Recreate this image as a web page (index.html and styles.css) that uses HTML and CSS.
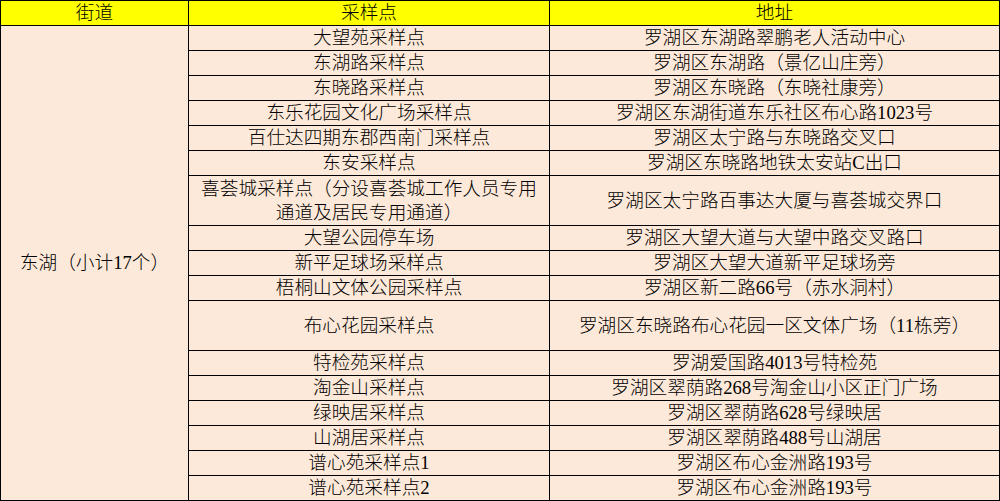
FILE: index.html
```html
<!DOCTYPE html>
<html lang="zh-CN">
<head>
<meta charset="utf-8">
<title>采样点</title>
<link rel="stylesheet" href="styles.css">
</head>
<body>
<div class="sheet">
  <div class="cell head">街道</div>
  <div class="cell head">采样点</div>
  <div class="cell head">地址</div>

  <div class="cell street">东湖（小计17个）</div>

  <div class="cell">大望苑采样点</div>
  <div class="cell">罗湖区东湖路翠鹏老人活动中心</div>
  <div class="cell">东湖路采样点</div>
  <div class="cell">罗湖区东湖路（景亿山庄旁）</div>
  <div class="cell">东晓路采样点</div>
  <div class="cell">罗湖区东晓路（东晓社康旁）</div>
  <div class="cell">东乐花园文化广场采样点</div>
  <div class="cell">罗湖区东湖街道东乐社区布心路1023号</div>
  <div class="cell">百仕达四期东郡西南门采样点</div>
  <div class="cell">罗湖区太宁路与东晓路交叉口</div>
  <div class="cell">东安采样点</div>
  <div class="cell">罗湖区东晓路地铁太安站C出口</div>
  <div class="cell">喜荟城采样点（分设喜荟城工作人员专用通道及居民专用通道）</div>
  <div class="cell">罗湖区太宁路百事达大厦与喜荟城交界口</div>
  <div class="cell">大望公园停车场</div>
  <div class="cell">罗湖区大望大道与大望中路交叉路口</div>
  <div class="cell">新平足球场采样点</div>
  <div class="cell">罗湖区大望大道新平足球场旁</div>
  <div class="cell">梧桐山文体公园采样点</div>
  <div class="cell">罗湖区新二路66号（赤水洞村）</div>
  <div class="cell">布心花园采样点</div>
  <div class="cell">罗湖区东晓路布心花园一区文体广场（11栋旁）</div>
  <div class="cell">特检苑采样点</div>
  <div class="cell">罗湖爱国路4013号特检苑</div>
  <div class="cell">淘金山采样点</div>
  <div class="cell">罗湖区翠荫路268号淘金山小区正门广场</div>
  <div class="cell">绿映居采样点</div>
  <div class="cell">罗湖区翠荫路628号绿映居</div>
  <div class="cell">山湖居采样点</div>
  <div class="cell">罗湖区翠荫路488号山湖居</div>
  <div class="cell">谱心苑采样点1</div>
  <div class="cell">罗湖区布心金洲路193号</div>
  <div class="cell">谱心苑采样点2</div>
  <div class="cell">罗湖区布心金洲路193号</div>
</div>
</body>
</html>
```

FILE: styles.css
```css
html, body {
  margin: 0;
  padding: 0;
  background: #ffffff;
}

.sheet {
  display: grid;
  grid-template-columns: 187px 360px 449px;
  grid-template-rows: 24px repeat(6, 24px) 49px repeat(3, 24px) 49px repeat(6, 24px);
  gap: 1px;
  padding: 1px;
  width: 1000px;
  box-sizing: border-box;
  background: #000000;
  font-family: "Liberation Serif", "Noto Sans CJK SC", serif;
  font-size: 18.67px;
  font-weight: 300;
  line-height: 24px;
  color: #000000;
}

.cell {
  background: #fde9d9;
  display: flex;
  align-items: center;
  justify-content: center;
  text-align: center;
  overflow: hidden;
  padding: 0 4px;
}

.head {
  background: #ffff00;
}

.street {
  grid-column: 1;
  grid-row: 2 / 19;
}
```
